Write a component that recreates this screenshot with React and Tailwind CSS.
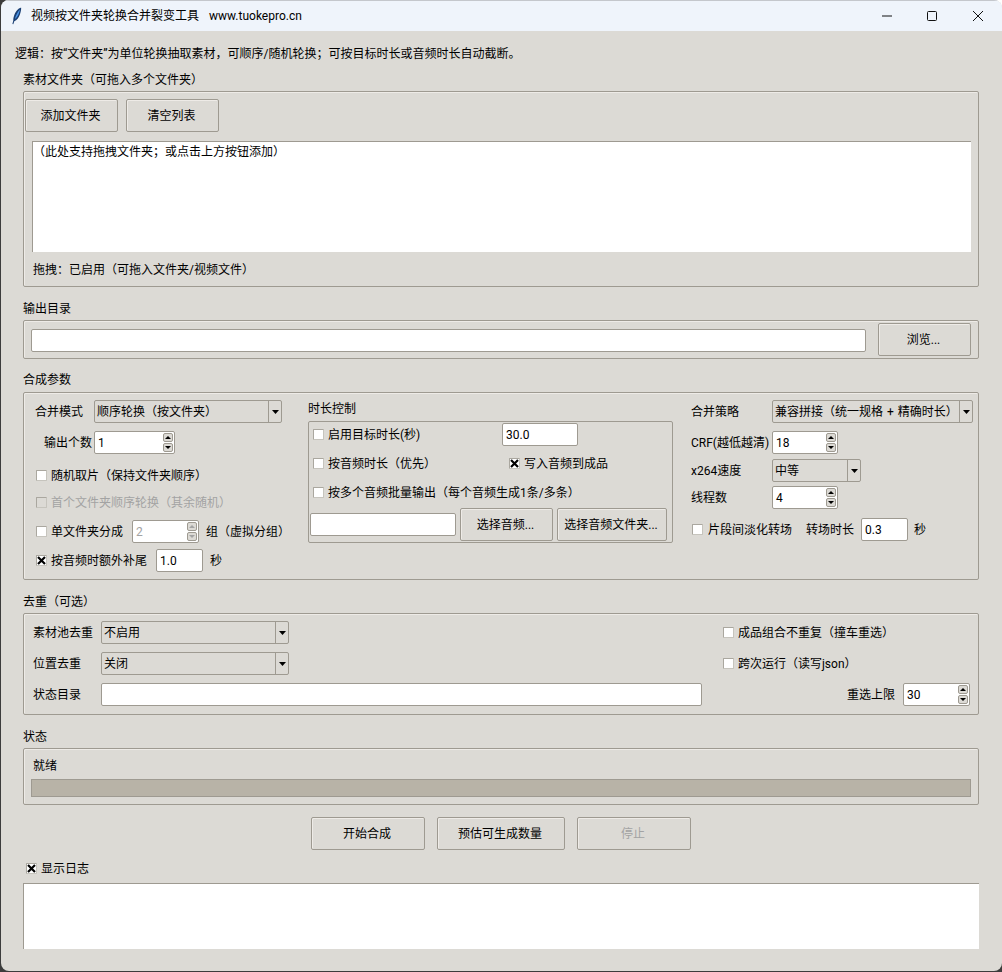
import React from "react";

const BORDER = "border border-[#9e9a91]";

function Btn({ w, children, disabled, className = "" }) {
  return (
    <div className={`${w} h-[33px] shrink-0 flex items-center justify-center pr-[2px] rounded-[2px] ${BORDER} bg-[#dcdad5] shadow-[inset_1px_1px_0_#eeebe7] ${disabled ? "text-[#a3a3a3]" : ""} ${className}`}>
      {children}
    </div>
  );
}

function Entry({ w, children, className = "" }) {
  return (
    <div className={`${w} h-[23px] shrink-0 bg-white rounded-[2px] ${BORDER} pl-[3px] flex items-center ${className}`}>
      {children}
    </div>
  );
}

function Arrow({ up, disabled }) {
  return (
    <svg width="6" height="3" viewBox="0 0 6 3" className="block">
      <path d={up ? "M3 0L6 3H0z" : "M0 0h6L3 3z"} fill={disabled ? "#a3a3a3" : "#000"} />
    </svg>
  );
}

function Spin({ w, value, disabled, className = "" }) {
  return (
    <div className={`${w} h-[23px] shrink-0 bg-white rounded-[2px] ${BORDER} pl-[3px] flex items-center justify-between ${disabled ? "text-[#a3a3a3]" : ""} ${className}`}>
      <span>{value}</span>
      <div className="flex flex-col gap-[1px] mr-[1px]">
        <div className="w-[10px] h-[9px] flex items-center justify-center rounded-[2px] border border-[#9e9a91] bg-[#dcdad5]"><Arrow up disabled={disabled} /></div>
        <div className="w-[10px] h-[9px] flex items-center justify-center rounded-[2px] border border-[#9e9a91] bg-[#dcdad5]"><Arrow disabled={disabled} /></div>
      </div>
    </div>
  );
}

function Combo({ w, value }) {
  return (
    <div className={`${w} h-[23px] shrink-0 bg-[#dcdad5] rounded-[2px] ${BORDER} pl-[2px] flex items-center justify-between`}>
      <span className="whitespace-pre [word-spacing:1px]">{value}</span>
      <div className="w-[13px] h-full border-l border-[#9e9a91] flex items-center justify-center">
        <svg width="7" height="4" viewBox="0 0 7 4" className="block"><path d="M0 0h7L3.5 4z" fill="#000" /></svg>
      </div>
    </div>
  );
}

function Check({ checked, disabled }) {
  return (
    <div className={`w-[11px] h-[11px] shrink-0 rounded-[1px] border border-t-[#aaa79f] border-l-[#aaa79f] border-r-[#c6c4bd] border-b-[#c6c4bd] ${disabled ? "bg-transparent" : "bg-white"} flex items-center justify-center`}>
      {checked && (
        <svg width="9" height="9" viewBox="0 0 9 9" className="block shrink-0">
          <path d="M1 1L8 8M8 1L1 8" stroke="#000" strokeWidth="2.2" />
        </svg>
      )}
    </div>
  );
}

function CheckRow({ checked, disabled, children, className = "" }) {
  return (
    <div className={`flex items-center h-[18px] gap-[4px] ${disabled ? "text-[#a3a3a3]" : ""} ${className}`}>
      <Check checked={checked} disabled={disabled} />
      <span className="pt-[1px]">{children}</span>
    </div>
  );
}

function Frame({ h, className = "", children }) {
  return (
    <div className={`${h} mt-[3px] rounded-[2px] ${BORDER} shadow-[inset_1px_1px_0_#eeebe7] ${className}`}>
      {children}
    </div>
  );
}

function Title({ mt, children }) {
  return <div className={`${mt} h-[18px] leading-[18px] pt-[1px]`}>{children}</div>;
}

export default function App() {
  return (
    <div className="relative w-[1002px] h-[972px] bg-[#3c3c3c] overflow-hidden font-['Roboto','Noto_Sans_CJK_SC',sans-serif] text-[12px] leading-[18px] text-black">
      <div className="absolute top-0 right-0 w-[8px] h-[8px] bg-white" />
      <div className="relative ml-[1px] w-[1001px] h-[971px] rounded-[8px] overflow-hidden bg-[#dcdad5] flex flex-col">
        {/* title bar */}
        <div className="h-[31px] shrink-0 bg-[#eff4fb] border-t border-[#c4c7cc] flex items-center">
          <svg width="12" height="18" viewBox="0 0 12 18" className="ml-[10px] mt-[-1px] shrink-0">
            <path d="M10.2 0.6C7 1.4 4.2 5 3 9c-.6 1.9-.8 3.4-.7 4.6L1.4 17l.9.2 1-3c2.6-.7 4.5-3.4 5.6-6.6 .8-2.4 1.3-4.8 1.3-7.4z" fill="#1a3f73" />
            <path d="M9 2.4C6.8 4.4 4.8 8.4 3.9 12c1.8-1.2 3.2-3.4 4-5.8 .5-1.4.9-2.6 1.1-3.8z" fill="#4a94e8" />
          </svg>
          <span className="ml-[8px]">视频按文件夹轮换合并裂变工具</span>
          <span className="ml-[10px]">www.tuokepro.cn</span>
          <div className="ml-auto flex items-center text-black">
            <svg width="10" height="10" viewBox="0 0 10 10" className="mr-[35px]"><path d="M0 5h10" stroke="#111" strokeWidth="1" /></svg>
            <svg width="10" height="10" viewBox="0 0 10 10" className="mr-[36px]"><rect x="0.5" y="0.5" width="9" height="9" rx="1" fill="none" stroke="#111" strokeWidth="1" /></svg>
            <svg width="10" height="10" viewBox="0 0 10 10" className="mr-[19px]"><path d="M0 0L10 10M10 0L0 10" stroke="#111" strokeWidth="1" /></svg>
          </div>
        </div>

        <div className="pl-[22px] pr-[23px] flex flex-col">
          <div className="mt-[14px] h-[18px] ml-[-8px]">逻辑：按“文件夹”为单位轮换抽取素材，可顺序/随机轮换；可按目标时长或音频时长自动截断。</div>

          {/* 素材 */}
          <Title mt="mt-[7px]">素材文件夹（可拖入多个文件夹）</Title>
          <Frame h="h-[196px]">
            <div className="flex gap-[8px] mt-[7px] ml-[1px]">
              <Btn w="w-[93px]">添加文件夹</Btn>
              <Btn w="w-[93px]">清空列表</Btn>
            </div>
            <div className="mt-[9px] ml-[8px] w-[939px] h-[111px] bg-white border-l border-t border-[#9e9a91] pt-[1px]">（此处支持拖拽文件夹；或点击上方按钮添加）</div>
            <div className="mt-[8px] ml-[9px] h-[18px] pt-[1px]">拖拽：已启用（可拖入文件夹/视频文件）</div>
          </Frame>

          {/* 输出 */}
          <Title mt="mt-[12px]">输出目录</Title>
          <Frame h="h-[39px]" className="flex items-start pt-[2px]">
            <Entry w="w-[835px]" className="mt-[6px] ml-[7px] h-[22px]" />
            <Btn w="w-[93px]" className="ml-[12px]">浏览...</Btn>
          </Frame>

          {/* 合成 */}
          <Title mt="mt-[11px]">合成参数</Title>
          <div className={`h-[188px] mt-[4px] rounded-[2px] ${BORDER} shadow-[inset_1px_1px_0_#eeebe7] flex`}>
            {/* left */}
            <div className="w-[284px] shrink-0 pl-[11px] pt-[7px] flex flex-col">
              <div className="flex items-center h-[23px]">
                <span className="w-[59px]">合并模式</span>
                <Combo w="w-[188px]" value="顺序轮换（按文件夹）" />
              </div>
              <div className="flex items-center h-[23px] mt-[8px] pl-[9px]">
                <span className="w-[50px]">输出个数</span>
                <Spin w="w-[81px]" value="1" />
              </div>
              <CheckRow className="mt-[12px] ml-[1px]">随机取片（保持文件夹顺序）</CheckRow>
              <CheckRow disabled className="mt-[9px] ml-[1px]">首个文件夹顺序轮换（其余随机）</CheckRow>
              <div className="flex items-center h-[23px] mt-[9px] ml-[1px]">
                <Check />
                <span className="ml-[4px]">单文件夹分成</span>
                <Spin w="w-[67px]" value="2" disabled className="ml-[9px]" />
                <span className="ml-[7px]">组（虚拟分组）</span>
              </div>
              <div className="flex items-center h-[23px] mt-[6px] ml-[1px]">
                <Check checked />
                <span className="ml-[4px]">按音频时额外补尾</span>
                <Entry w="w-[47px]" className="ml-[9px]">1.0</Entry>
                <span className="ml-[7px]">秒</span>
              </div>
            </div>

            {/* middle */}
            <div className="w-[383px] shrink-0 pt-[7px]">
              <div className="h-[18px]">时长控制</div>
              <div className={`w-[365px] h-[122px] mt-[3px] rounded-[2px] ${BORDER}`}>
                <div className="flex h-[23px] mt-[1px] items-center">
                  <CheckRow className="w-[193px] pl-[4px]">启用目标时长(秒)</CheckRow>
                  <Entry w="w-[76px]">30.0</Entry>
                </div>
                <div className="flex h-[18px] mt-[8px]">
                  <CheckRow className="w-[200px] pl-[4px]">按音频时长（优先）</CheckRow>
                  <CheckRow checked>写入音频到成品</CheckRow>
                </div>
                <CheckRow className="mt-[11px] pl-[4px]">按多个音频批量输出（每个音频生成1条/多条）</CheckRow>
                <div className="flex mt-[7px]">
                  <Entry w="w-[146px]" className="ml-[1px] mt-[5px]" />
                  <Btn w="w-[93px]" className="ml-[4px]">选择音频...</Btn>
                  <Btn w="w-[110px]" className="ml-[4px]">选择音频文件夹...</Btn>
                </div>
              </div>
            </div>

            {/* right */}
            <div className="flex-1 pt-[7px] flex flex-col">
              <div className="flex items-center h-[23px]">
                <span className="w-[81px]">合并策略</span>
                <Combo w="w-[201px]" value="兼容拼接（统一规格 + 精确时长）" />
              </div>
              <div className="flex items-center h-[23px] mt-[8px]">
                <span className="w-[81px]">CRF(越低越清)</span>
                <Spin w="w-[66px]" value="18" />
              </div>
              <div className="flex items-center h-[23px] mt-[5px]">
                <span className="w-[81px]">x264速度</span>
                <Combo w="w-[89px]" value="中等" />
              </div>
              <div className="flex items-center h-[23px] mt-[4px]">
                <span className="w-[81px]">线程数</span>
                <Spin w="w-[66px]" value="4" />
              </div>
              <div className="flex items-center h-[23px] mt-[9px] ml-[1px]">
                <Check />
                <span className="ml-[5px] w-[98px]">片段间淡化转场</span>
                <span className="w-[55px]">转场时长</span>
                <Entry w="w-[47px]">0.3</Entry>
                <span className="ml-[6px]">秒</span>
              </div>
            </div>
          </div>

          {/* 去重 */}
          <Title mt="mt-[12px]">去重（可选）</Title>
          <Frame h="h-[102px]" className="pt-[7px]">
            <div className="flex items-center h-[23px] pl-[9px]">
              <span className="w-[68px]">素材池去重</span>
              <Combo w="w-[188px]" value="不启用" />
              <CheckRow className="ml-auto w-[255px]">成品组合不重复（撞车重选）</CheckRow>
            </div>
            <div className="flex items-center h-[23px] pl-[9px] mt-[8px]">
              <span className="w-[68px]">位置去重</span>
              <Combo w="w-[188px]" value="关闭" />
              <CheckRow className="ml-auto w-[255px]">跨次运行（读写json）</CheckRow>
            </div>
            <div className="flex items-center h-[23px] pl-[9px] mt-[8px]">
              <span className="w-[68px]">状态目录</span>
              <Entry w="w-[601px]" />
              <span className="ml-auto">重选上限</span>
              <Spin w="w-[67px]" value="30" className="ml-[8px] mr-[8px]" />
            </div>
          </Frame>

          {/* 状态 */}
          <Title mt="mt-[12px]">状态</Title>
          <Frame h="h-[57px]" className="pt-[7px]">
            <div className="h-[18px] ml-[9px] pt-[1px]">就绪</div>
            <div className={`mt-[5px] ml-[7px] w-[940px] h-[18px] bg-[#b8b3a7] ${BORDER}`} />
          </Frame>

          <div className="mt-[12px] flex justify-center gap-[12px]">
            <Btn w="w-[114px]">开始合成</Btn>
            <Btn w="w-[128px]">预估可生成数量</Btn>
            <Btn w="w-[114px]" disabled>停止</Btn>
          </div>

          <CheckRow checked className="mt-[9px] ml-[3px]">显示日志</CheckRow>

          <div className="mt-[6px] h-[66px] bg-white border-l border-t border-[#9e9a91]" />
        </div>
      </div>
    </div>
  );
}
